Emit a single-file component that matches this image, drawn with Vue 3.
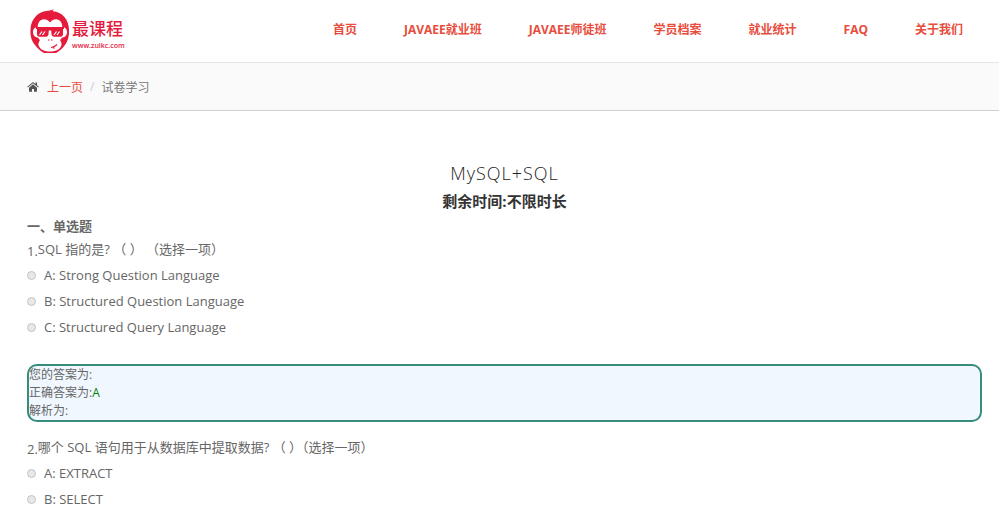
<script setup>
import { ref } from 'vue'

const navs = ['首页', 'JAVAEE就业班', 'JAVAEE师徒班', '学员档案', '就业统计', 'FAQ', '关于我们']

const questions = ref([
  {
    id: 1,
    title: 'SQL 指的是? （ ） （选择一项）',
    options: [
      { key: 'A', text: 'Strong Question Language' },
      { key: 'B', text: 'Structured Question Language' },
      { key: 'C', text: 'Structured Query Language' }
    ],
    checked: '',
    answer: 'A',
    showAnswer: true
  },
  {
    id: 2,
    title: '哪个 SQL 语句用于从数据库中提取数据? （ ）（选择一项）',
    options: [
      { key: 'A', text: 'EXTRACT' },
      { key: 'B', text: 'SELECT' }
    ],
    checked: '',
    answer: '',
    showAnswer: false
  }
])
</script>

<template>
  <div class="page">
    <header class="header">
      <a class="logo" href="#">
        <svg class="logo-icon" viewBox="0 0 40 44" aria-hidden="true">
          <path fill="#e51b3b" d="M24 0c-1 1-1.500 1.500-1 2.200C32 3 38.500 10 39 20c.4 7-1 12-4 16-2.500 3.500-6 6.500-9 8H14c-3-1.500-6.500-4.500-9-8C1.500 32 0 27 .5 20 1 9.500 9 2 18 1.800 20.500 1.600 22 1 24 0z" />
          <path fill="#fff" d="M20 13.500c-3.500-4.500-9.500-4-11.500.5-.6 1.400-.8 2.600-.8 4C4.500 18 2.800 20.500 3 23.500c.2 2.800 2 5 5 5 .5 1.200 1.200 2 2 2.500-1.500 1.800-2 4-1.200 6C10.300 40.800 15 42.500 20 42.500s9.700-1.700 11.200-5.500c.8-2 .3-4.200-1.200-6 .8-.5 1.500-1.300 2-2.500 3 0 4.800-2.200 5-5 .2-3-1.500-5.500-4.700-5.500 0-1.400-.2-2.600-.8-4-2-4.500-8-5-11.500-.5z" />
          <path fill="#e51b3b" d="M6 18h28v2h-1v5c0 1.700-1 2.700-2.700 2.700h-6c-1.700 0-2.700-1-2.800-2.700l-.3-3.500h-2.400l-.3 3.500c-.1 1.700-1.100 2.700-2.800 2.700h-6C8 27.700 7 26.700 7 25v-5H6z" />
          <path stroke="#fff" stroke-width="1.200" fill="none" d="M9.500 26l2.500-3.500M12.500 26l2.500-3.500M24 26l2.500-3.500M27 26l2.500-3.500" />
          <path stroke="#e51b3b" stroke-width="1.200" fill="none" d="M18 31h1.500M21 31h1.500M21 38.500c2-.2 4.500-1.500 6-3M23 37.700l1.300 2" />
        </svg>
        <span class="logo-text">
          <strong>最课程</strong>
          <small>www.zuikc.com</small>
        </span>
      </a>
      <nav class="nav">
        <a v-for="item in navs" :key="item" href="#">{{ item }}</a>
      </nav>
    </header>

    <div class="breadcrumb">
      <svg class="home" viewBox="0 0 12 10" aria-hidden="true">
        <path fill="#555" d="M6 2.300l4 3.400V9.300c0 .3-.2.500-.5.500H7V7H5v2.800H2.500c-.3 0-.5-.2-.5-.5V5.700z" />
        <path fill="#555" d="M5.400.4c.4-.3.800-.3 1.200 0L8.500 2V.6H10v2.700l1.800 1.500-.6.700L6 1.200.8 5.500l-.6-.7z" />
      </svg>
      <a href="#">上一页</a>
      <span class="separator">/</span>
      <span>试卷学习</span>
    </div>

    <main class="paper">
      <h1>MySQL+SQL</h1>
      <h2>剩余时间:不限时长</h2>
      <h3>一、单选题</h3>

      <section v-for="q in questions" :key="q.id" class="question">
        <p class="title"><span class="num">{{ q.id }}.</span>{{ q.title }}</p>
        <label v-for="o in q.options" :key="o.key" class="option">
          <input v-model="q.checked" type="radio" :name="'question' + q.id" :value="o.key">
          <span>{{ o.key }}: {{ o.text }}</span>
        </label>
        <div v-if="q.showAnswer" class="answer">
          <div>您的答案为:{{ q.checked }}</div>
          <div>正确答案为:<span class="right">{{ q.answer }}</span></div>
          <div>解析为:</div>
        </div>
      </section>
    </main>
  </div>
</template>

<style>
body {
  background: #fff;
}
</style>

<style scoped>
.page {
  font-family: "Open Sans", "Noto Sans CJK SC", sans-serif;
  font-size: 13px;
  color: #666;
}

a {
  color: #e74c3c;
  text-decoration: none;
}

/* 顶部导航 */
.header {
  display: flex;
  justify-content: space-between;
  height: 62px;
  padding: 0 36px 0 30px;
  border-bottom: 1px solid #e6e6e6;
}

.logo {
  display: flex;
  align-items: center;
  gap: 2px;
  color: #e51b3b;
}

.logo-icon {
  width: 40px;
  height: 44px;
}

.logo-text {
  display: flex;
  flex-direction: column;
  padding-top: 10px;
}

.logo-text strong {
  font-size: 17px;
  line-height: 20px;
  font-weight: 500;
}

.logo-text small {
  font-size: 7px;
  line-height: 14px;
  font-weight: 600;
}

.nav {
  display: flex;
  gap: 47px;
  font-size: 12px;
  line-height: 60px;
  font-weight: 700;
}

/* 面包屑 */
.breadcrumb {
  display: flex;
  align-items: center;
  height: 47px;
  padding: 0 27px;
  font-size: 12px;
  background: #fafafa;
  border-bottom: 1px solid #d0d0d0;
  color: #777;
}

.home {
  width: 12px;
  height: 10px;
  margin-right: 8px;
}

.separator {
  padding: 0 7px;
  color: #ccc;
}

/* 试卷 */
.paper {
  padding: 48px 17px 0 27px;
}

h1,
h2,
h3,
p {
  margin: 0;
}

h1 {
  font-size: 18px;
  line-height: 28px;
  font-weight: 300;
  letter-spacing: 1px;
  text-align: center;
  color: #222;
}

h2 {
  font-size: 15px;
  line-height: 28px;
  font-weight: 700;
  text-align: center;
  color: #333;
}

h3 {
  font-size: 13px;
  line-height: 23px;
  font-weight: 700;
}

.title {
  line-height: 22px;
}

.num {
  vertical-align: -2px;
}

.option {
  display: flex;
  align-items: center;
  gap: 8px;
  height: 26px;
}

.option input {
  appearance: none;
  width: 9px;
  height: 9px;
  margin: 0;
  border: 1px solid #c4c4c4;
  border-radius: 50%;
  background: #e8e8e8;
}

.option input:checked {
  background: #666;
}

.answer {
  margin: 24px 0 14px;
  border: 2px solid #368c7d;
  border-radius: 10px;
  background: #f0f7ff;
  font-size: 12px;
  line-height: 18px;
}

.right {
  color: #008000;
}
</style>
